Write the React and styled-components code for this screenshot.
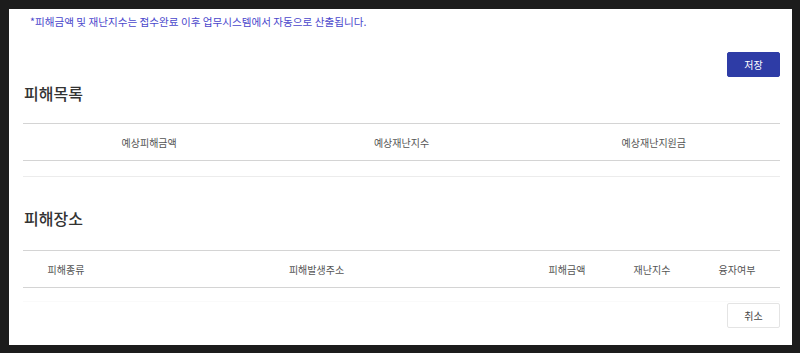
import React from "react";
import styled, { createGlobalStyle } from "styled-components";

const GlobalStyle = createGlobalStyle`
  html, body {
    margin: 0;
    padding: 0;
    background: #1c1c1c;
  }
  body {
    font-family: "Noto Sans CJK KR", "Noto Sans", sans-serif;
  }
`;

const summaryColumns = ["예상피해금액", "예상재난지수", "예상재난지원금"];

const placeColumns = [
  { label: "피해종류", width: "86px" },
  { label: "피해발생주소", width: "1fr" },
  { label: "피해금액", width: "86px" },
  { label: "재난지수", width: "84px" },
  { label: "융자여부", width: "86px" },
];

const App = () => {
  return (
    <Page>
      <GlobalStyle />
      <Panel>
        <Notice>*피해금액 및 재난지수는 접수완료 이후 업무시스템에서 자동으로 산출됩니다.</Notice>
        <ButtonRow>
          <Button primary>저장</Button>
        </ButtonRow>
        <SectionTitle>피해목록</SectionTitle>
        <Table top={19}>
          <HeadRow cols="1fr 1fr 1fr">
            {summaryColumns.map(col => (
              <HeadCell key={col}>{col}</HeadCell>
            ))}
          </HeadRow>
          <EmptyRow height={15} line="#ececec" />
        </Table>
        <SectionTitle top={30}>피해장소</SectionTitle>
        <Table top={21}>
          <HeadRow cols={placeColumns.map(c => c.width).join(" ")}>
            {placeColumns.map(col => (
              <HeadCell key={col.label}>{col.label}</HeadCell>
            ))}
          </HeadRow>
          <EmptyRow height={13} line="#fafafa" />
        </Table>
        <ButtonRow top={1}>
          <Button>취소</Button>
        </ButtonRow>
      </Panel>
    </Page>
  );
};
export default App;

const Page = styled.div`
  width: 800px;
  height: 353px;
  padding: 9px 8px 8px 9px;
  box-sizing: border-box;
`;

const Panel = styled.div`
  background: #ffffff;
  height: 336px;
  box-sizing: border-box;
  padding: 6px 12px 0 14px;
  display: flex;
  flex-direction: column;
`;

const Notice = styled.div`
  margin-left: 7px;
  font-size: 10.6px;
  line-height: 14px;
  color: #4a47cc;
`;

const ButtonRow = styled.div`
  display: flex;
  justify-content: flex-end;
  margin-top: ${props => (props.top !== undefined ? props.top : 23)}px;
`;

const Button = styled.button`
  width: 53px;
  height: 25px;
  padding: 0;
  font-family: inherit;
  font-size: 10px;
  border-radius: 2px;
  cursor: pointer;
  background: ${props => (props.primary ? "#2e3ca6" : "#ffffff")};
  color: ${props => (props.primary ? "#ffffff" : "#444444")};
  border: 1px solid ${props => (props.primary ? "#2e3ca6" : "#e4e4e4")};
`;

const SectionTitle = styled.h2`
  margin: ${props => props.top || 5}px 0 0 1px;
  font-size: 16px;
  line-height: 22px;
  font-weight: 500;
  color: #333333;
`;

const Table = styled.div`
  margin-top: ${props => props.top}px;
`;

const HeadRow = styled.div`
  display: grid;
  grid-template-columns: ${props => props.cols};
  height: 38px;
  box-sizing: border-box;
  border-top: 1px solid #d4d4d4;
  border-bottom: 1px solid #d4d4d4;
  align-items: center;
`;

const HeadCell = styled.div`
  text-align: center;
  font-size: 10px;
  color: #555555;
`;

const EmptyRow = styled.div`
  height: ${props => props.height}px;
  border-bottom: 1px solid ${props => props.line};
`;
